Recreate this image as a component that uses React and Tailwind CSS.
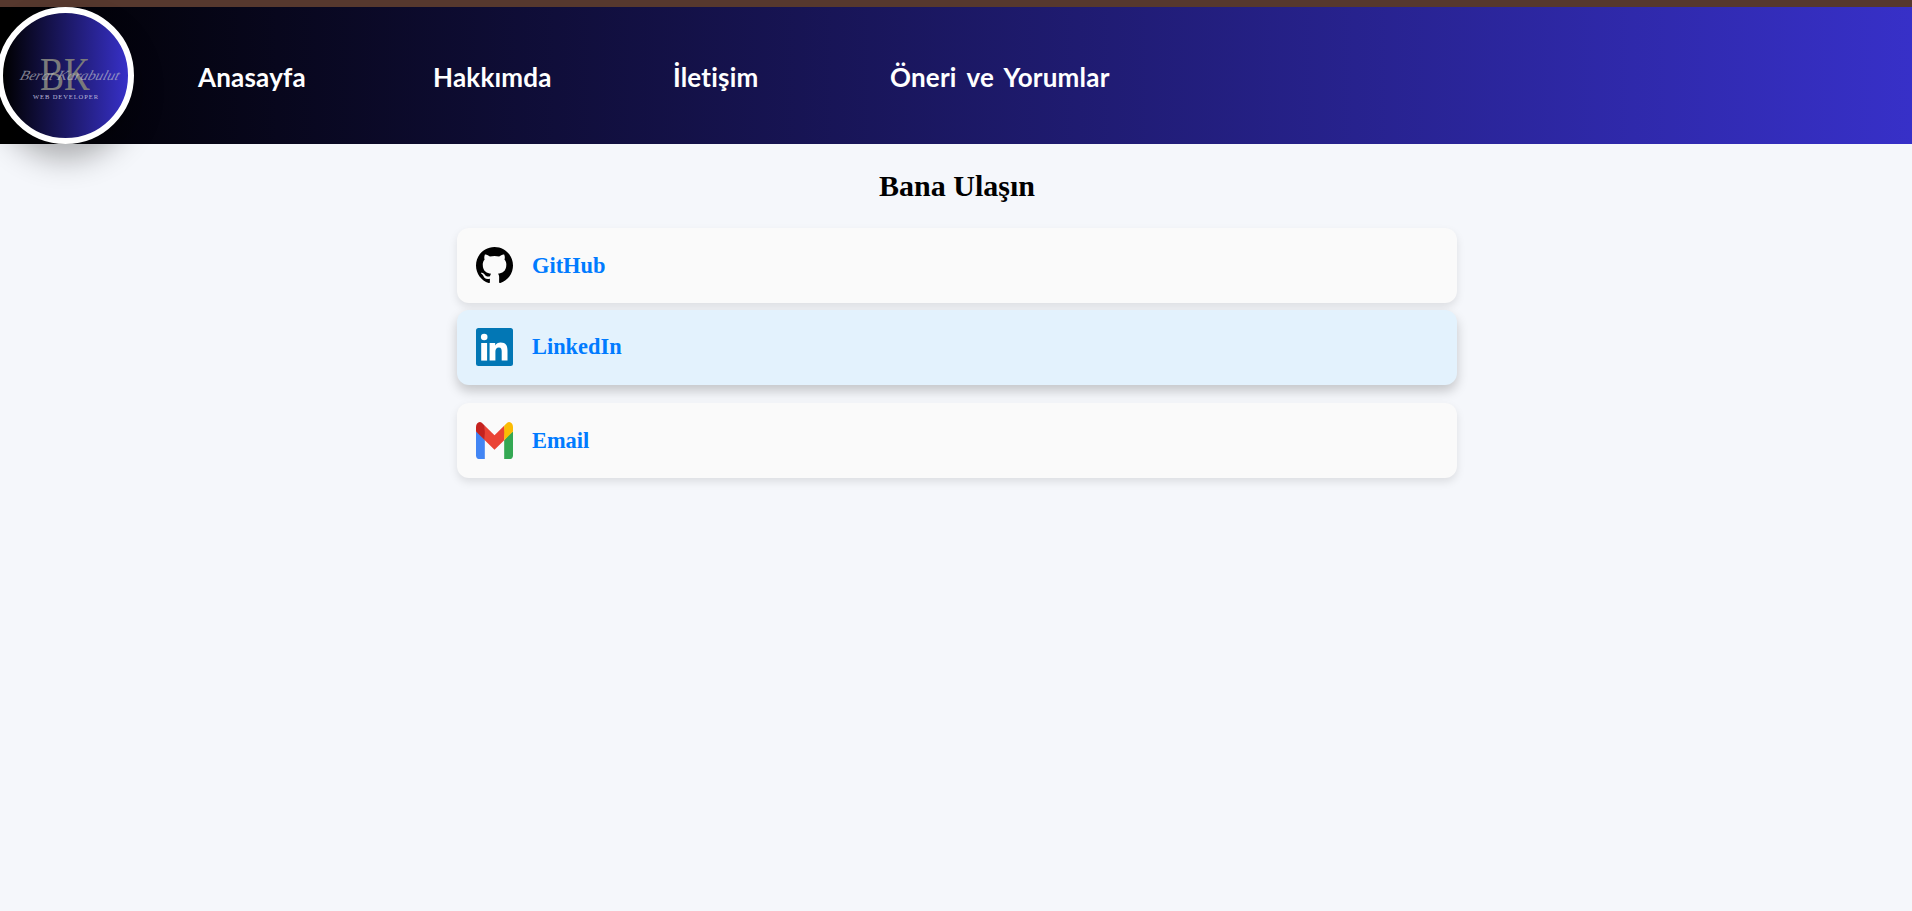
const links = [
  ["Anasayfa", "w-[110px]"],
  ["Hakkımda", "w-[115px]"],
  ["İletişim", "w-[92px]"],
  ["Öneri ve Yorumlar", "w-[220px]"],
];

function GitHubIcon() {
  return (
    <svg viewBox="0 0 16 16" className="w-[37px] h-[37px] shrink-0" fill="#000">
      <path d="M8 0C3.58 0 0 3.58 0 8c0 3.54 2.29 6.53 5.47 7.59.4.07.55-.17.55-.38 0-.19-.01-.82-.01-1.49-2.01.37-2.53-.49-2.69-.94-.09-.23-.48-.94-.82-1.13-.28-.15-.68-.52-.01-.53.63-.01 1.08.58 1.23.82.72 1.21 1.87.87 2.33.66.07-.52.28-.87.51-1.07-1.78-.2-3.64-.89-3.64-3.95 0-.87.31-1.59.82-2.15-.08-.2-.36-1.02.08-2.12 0 0 .67-.21 2.2.82.64-.18 1.32-.27 2-.27.68 0 1.36.09 2 .27 1.53-1.04 2.2-.82 2.2-.82.44 1.1.16 1.92.08 2.12.51.56.82 1.27.82 2.15 0 3.07-1.87 3.75-3.65 3.95.29.25.54.73.54 1.48 0 1.07-.01 1.93-.01 2.2 0 .21.15.46.55.38A8.013 8.013 0 0016 8c0-4.42-3.58-8-8-8z" />
    </svg>
  );
}

function LinkedInIcon() {
  return (
    <svg viewBox="0 0 37 38" className="w-[37px] h-[38px] shrink-0">
      <rect width="37" height="38" rx="2.5" fill="#0277b5" />
      <circle cx="8.2" cy="9" r="3.3" fill="#fff" />
      <rect x="5.2" y="15" width="5.9" height="17.6" fill="#fff" />
      <path fill="#fff" d="M13.6 15h5.6v2.4c.9-1.7 2.9-2.9 5.4-2.9 5.4 0 6.9 3.2 6.9 8v10.1h-5.8v-9.1c0-2.3-.4-4.1-2.8-4.1-2.5 0-3.5 1.8-3.5 4.2v9h-5.8z" />
    </svg>
  );
}

function GmailIcon() {
  return (
    <svg viewBox="3 8 42 32" preserveAspectRatio="none" className="w-[37px] h-[37px] shrink-0">
      <path fill="#34a853" d="M45 16.2l-5 2.75-5 4.75V40h7c1.657 0 3-1.343 3-3V16.2z" />
      <path fill="#4285f4" d="M3 16.2l3.614 1.71L13 23.7V40H6c-1.657 0-3-1.343-3-3V16.2z" />
      <polygon fill="#ea4335" points="35,11.2 24,19.45 13,11.2 12,17 13,23.7 24,31.95 35,23.7 36,17" />
      <path fill="#c5221f" d="M3 12.298V16.2l10 7.5V11.2L9.876 8.859C9.132 8.301 8.228 8 7.298 8 4.924 8 3 9.924 3 12.298z" />
      <path fill="#fbbc04" d="M45 12.298V16.2l-10 7.5V11.2l3.124-2.341C38.868 8.301 39.772 8 40.702 8 43.076 8 45 9.924 45 12.298z" />
    </svg>
  );
}

function Logo() {
  return (
    <div className="w-[137px] h-[137px] shrink-0 -ml-[3px] rounded-full border-[6px] border-white shadow-[0_15px_30px_rgba(0,0,0,0.3)] bg-[linear-gradient(to_right,#000000,#3730c8)] overflow-hidden">
      <svg viewBox="0 0 125 125" className="w-full h-full">
        <text x="37" y="77" textLength="50" lengthAdjust="spacingAndGlyphs" fontFamily="'Liberation Serif', serif" fontSize="47" fill="#7a7a7a">BK</text>
        <text transform="translate(16 67) skewX(-18)" textLength="99" lengthAdjust="spacingAndGlyphs" fontFamily="'Liberation Serif', serif" fontStyle="italic" fontSize="14" fill="#c4c4cc" fillOpacity="0.65">Berat Karabulut</text>
        <text x="30" y="86" textLength="65" fontFamily="'Liberation Serif', serif" fontSize="6.5" fill="#b9b8d8">WEB DEVELOPER</text>
      </svg>
    </div>
  );
}

function ContactCard({ icon, label, active }) {
  return (
    <a
      href="#"
      className={
        active
          ? "flex items-center h-[75px] px-[19px] rounded-xl bg-[#e3f2fd] shadow-[0_6px_12px_rgba(0,0,0,0.2)] -translate-y-[6px]"
          : "flex items-center h-[75px] px-[19px] rounded-xl bg-[#fafafa] shadow-[0_4px_8px_rgba(0,0,0,0.1)]"
      }
    >
      {icon}
      <span className="ml-[19px] text-[22.4px] font-bold text-[#007bff]">{label}</span>
    </a>
  );
}

export default function App() {
  return (
    <div className="min-h-[911px] bg-[#f5f7fb] font-['Liberation_Serif',serif]">
      <div className="h-[7px] bg-[#56382e]" />
      <nav className="h-[137px] flex items-center bg-[linear-gradient(to_right,#000000,#3730c8)]">
        <Logo />
        <ul className="flex items-center gap-[125px] ml-[64px] pt-[4px] font-['Comic_Sans_MS','Lato',sans-serif] text-[26px] tracking-[0.2px] [word-spacing:4px] font-bold text-white">
          {links.map(([label, w]) => (
            <li key={label} className={w + " whitespace-nowrap"}>
              <a href="#">{label}</a>
            </li>
          ))}
        </ul>
      </nav>
      <main className="w-[1002px] pl-[2px] mx-auto">
        <h1 className="text-[30px] leading-[33px] font-bold text-black text-center mt-[25px] mb-[26px]">Bana Ulaşın</h1>
        <div className="flex flex-col gap-[12.5px]">
          <ContactCard icon={<GitHubIcon />} label="GitHub" />
          <ContactCard icon={<LinkedInIcon />} label="LinkedIn" active />
          <ContactCard icon={<GmailIcon />} label="Email" />
        </div>
      </main>
    </div>
  );
}
